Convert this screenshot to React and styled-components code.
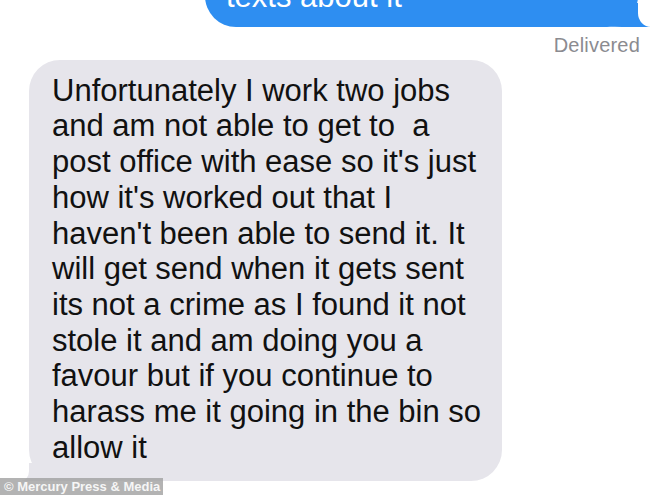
import React from "react";
import styled, { createGlobalStyle } from "styled-components";

const GlobalStyle = createGlobalStyle`
  html, body {
    margin: 0;
    padding: 0;
    background: #ffffff;
    overflow: hidden;
  }
  body {
    font-family: "Liberation Sans", Arial, Helvetica, sans-serif;
  }
`;

const Screen = styled.div`
  position: relative;
  width: 670px;
  height: 495px;
  overflow: hidden;
  display: flex;
  flex-direction: column;
  background: #fff;
`;

const Bubble = styled.div`
  position: relative;
  box-sizing: border-box;
  width: ${props => props.width}px;
  border-radius: 31px;
  font-size: 31px;
  line-height: 35.7px;
  color: ${props => (props.outgoing ? "#ffffff" : "#111111")};
  background: ${props => (props.outgoing ? "#2e8ef1" : "#e6e5eb")};
  align-self: ${props => (props.outgoing ? "flex-end" : "flex-start")};

  /* tail: coloured block under the corner, then a white block with a rounded corner cuts the curve */
  &::before {
    content: "";
    position: absolute;
    bottom: 0;
    ${props => (props.outgoing ? "right: -12px;" : "left: -7px;")}
    width: 48px;
    height: ${props => (props.outgoing ? 24 : 18)}px;
    background: ${props => (props.outgoing ? "#2e8ef1" : "#e6e5eb")};
    ${props =>
      props.outgoing
        ? "border-bottom-left-radius: 20px 4px;"
        : "border-bottom-right-radius: 20px 4px;"}
  }

  &::after {
    content: "";
    position: absolute;
    bottom: 0;
    ${props => (props.outgoing ? "right: -34px;" : "left: -30px;")}
    width: ${props => (props.outgoing ? 34 : 30)}px;
    height: ${props => (props.outgoing ? 28 : 22)}px;
    background: #ffffff;
    ${props =>
      props.outgoing
        ? "border-bottom-left-radius: 13px 14px;"
        : "border-bottom-right-radius: 8px 10px;"}
  }
`;

const SentBubble = styled(Bubble)`
  margin-top: -35px;
  margin-right: 32px;
  padding: 14px 20px 12px 21px;
`;

const ReceivedBubble = styled(Bubble)`
  margin-top: 5px;
  margin-left: 29px;
  padding: 13px 20px 16px 23px;
`;

const Line = styled.div`
  position: relative;
  z-index: 2;
  white-space: pre;
`;

const Status = styled.div`
  align-self: flex-end;
  margin-top: 8px;
  margin-right: 30px;
  font-size: 20px;
  line-height: 20px;
  color: #8b8b90;
  letter-spacing: 0.2px;
`;

const Watermark = styled.div`
  position: absolute;
  left: 0;
  bottom: 0;
  width: 163px;
  height: 17px;
  box-sizing: border-box;
  padding-left: 4px;
  background: rgba(160, 160, 160, 0.8);
  color: #f6f6f6;
  font-size: 13px;
  font-weight: bold;
  line-height: 17px;
  white-space: nowrap;
`;

const lines = [
  "Unfortunately I work two jobs",
  "and am not able to get to  a",
  "post office with ease so it's just",
  "how it's worked out that I",
  "haven't been able to send it. It",
  "will get send when it gets sent",
  "its not a crime as I found it not",
  "stole it and am doing you a",
  "favour but if you continue to",
  "harass me it going in the bin so",
  "allow it"
];

export default function App() {
  return (
    <Screen>
      <GlobalStyle />
      <SentBubble outgoing width={433}>
        <Line>texts about it</Line>
      </SentBubble>
      <Status>Delivered</Status>
      <ReceivedBubble width={473}>
        {lines.map((text, i) => (
          <Line key={i}>{text}</Line>
        ))}
      </ReceivedBubble>
      <Watermark>© Mercury Press &amp; Media</Watermark>
    </Screen>
  );
}
